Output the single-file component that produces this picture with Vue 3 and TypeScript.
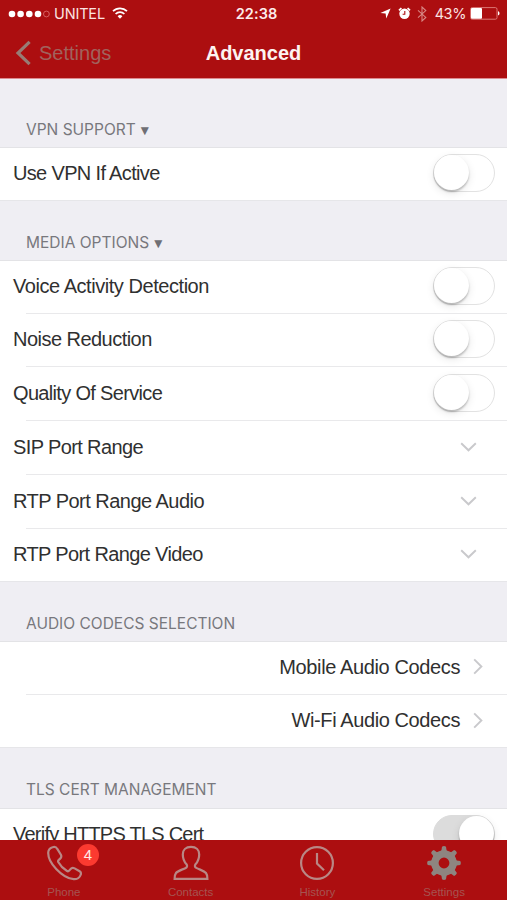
<script setup lang="ts">
interface Row {
  label: string
  kind: 'toggle' | 'expand' | 'link'
  on?: boolean
  spacing: number
}

interface Section {
  title: string
  collapsible: boolean
  height: number
  rows: Row[]
}

const sections: Section[] = [
  {
    title: 'VPN SUPPORT',
    collapsible: true,
    height: 68,
    rows: [{ label: 'Use VPN If Active', kind: 'toggle', spacing: -0.66 }],
  },
  {
    title: 'MEDIA OPTIONS',
    collapsible: true,
    height: 59.5,
    rows: [
      { label: 'Voice Activity Detection', kind: 'toggle', spacing: -0.45 },
      { label: 'Noise Reduction', kind: 'toggle', spacing: -0.53 },
      { label: 'Quality Of Service', kind: 'toggle', spacing: -0.67 },
      { label: 'SIP Port Range', kind: 'expand', spacing: -0.62 },
      { label: 'RTP Port Range Audio', kind: 'expand', spacing: -0.53 },
      { label: 'RTP Port Range Video', kind: 'expand', spacing: -0.63 },
    ],
  },
  {
    title: 'AUDIO CODECS SELECTION',
    collapsible: false,
    height: 58.8,
    rows: [
      { label: 'Mobile Audio Codecs', kind: 'link', spacing: -0.38 },
      { label: 'Wi-Fi Audio Codecs', kind: 'link', spacing: -0.4 },
    ],
  },
  {
    title: 'TLS CERT MANAGEMENT',
    collapsible: false,
    height: 59.5,
    rows: [{ label: 'Verify HTTPS TLS Cert', kind: 'toggle', on: true, spacing: -0.76 }],
  },
]
</script>

<template>
  <div class="screen">
    <header class="top">
      <div class="status">
        <div class="status-side">
          <svg class="signal" width="42" height="10" viewBox="0 0 42 10">
            <circle cx="4" cy="5" r="3.3" />
            <circle cx="12.6" cy="5" r="3.3" />
            <circle cx="21.3" cy="5" r="3.3" />
            <circle cx="30" cy="5" r="3.3" />
            <circle class="empty" cx="38.4" cy="5" r="2.9" />
          </svg>
          <span class="carrier">UNITEL</span>
          <svg class="wifi" width="16" height="12" viewBox="0 0 16 12">
            <path d="M1 4.2a10 10 0 0 1 14 0M3.6 7a6.3 6.3 0 0 1 8.8 0" />
            <path class="solid" d="M8 11.8 5.6 9.2a3.5 3.5 0 0 1 4.8 0z" />
          </svg>
        </div>
        <span class="clock">22:38</span>
        <div class="status-side right">
          <svg class="location" width="11" height="11" viewBox="0 0 11 11">
            <path d="M10.6.4 6.3 10.6 5.6 5.6.4 4.9z" />
          </svg>
          <svg class="alarm" width="13" height="13" viewBox="0 0 13 13">
            <path class="bells" d="M1 3.3 3.4 1M12 3.3 9.6 1" />
            <circle cx="6.5" cy="6.8" r="5.2" />
            <path class="hands" d="M6.8 3.9v3.3H4.6" />
          </svg>
          <svg class="bluetooth" width="10" height="16" viewBox="0 0 10 16">
            <path d="M1 4.3 8.8 11.4 5 15V1l3.8 3.6L1 11.7" />
          </svg>
          <span class="percent">43%</span>
          <svg class="battery" width="30" height="13" viewBox="0 0 30 13">
            <rect class="case" x=".6" y=".6" width="26.4" height="11.6" rx="1.6" />
            <rect class="level" x="1" y="1" width="11" height="10.8" rx="1" />
            <path class="level" d="M28 4.3c2 .6 2 3.6 0 4.2z" />
          </svg>
        </div>
      </div>
      <nav class="nav">
        <div class="back">
          <svg width="17" height="26" viewBox="0 0 17 26"><path d="M14.6 1.8 3 13l11.6 11.2" /></svg>
          <span>Settings</span>
        </div>
        <h1>Advanced</h1>
        <div></div>
      </nav>
    </header>

    <main class="content">
      <section v-for="section in sections" :key="section.title">
        <h2 class="heading" :style="{ height: section.height + 'px' }">
          <span>{{ section.title }}</span>
          <span v-if="section.collapsible" class="caret">▼</span>
        </h2>
        <div class="rows">
          <div v-for="row in section.rows" :key="row.label" class="row" :class="row.kind">
            <span class="label" :style="{ letterSpacing: row.spacing + 'px' }">{{ row.label }}</span>
            <span v-if="row.kind === 'toggle'" class="switch" :class="{ on: row.on }"><i></i></span>
            <svg v-else-if="row.kind === 'expand'" class="chevron" width="17" height="10" viewBox="0 0 17 10">
              <path d="M1.2 1.2 8.5 8.3l7.3-7.1" />
            </svg>
            <svg v-else class="chevron" width="10" height="17" viewBox="0 0 10 17">
              <path d="M1.2 1.4 8.4 8.5l-7.2 7.1" />
            </svg>
          </div>
        </div>
      </section>
    </main>

    <footer class="tabs">
      <div class="tab">
        <svg width="36" height="36" viewBox="0 0 36 36">
          <path d="M6.5 2.2C4 3 2.2 5 2.2 8c0 5 3.300 11 8 16 5 5.300 12 9.900 17.500 10.200 3.300.2 6.300-1.900 7.100-4.700.4-1.400-.1-2.500-1.200-3.200l-5-2.900c-1.500-.8-3-.6-4 .6l-1.400 1.600c-.7.8-1.600.8-2.500.2-3.500-2.100-6.400-5.100-8.300-8.500-.5-.9-.4-1.700.4-2.400l1.400-1.300c1.200-1.100 1.400-2.400.7-3.800L11.300 3.900c-1-1.900-2.800-2.400-4.800-1.700z" />
        </svg>
        <span>Phone</span>
        <b class="badge">4</b>
      </div>
      <div class="tab">
        <svg width="36" height="36" viewBox="0 0 36 36">
          <path d="M18 1.900c-5.200 0-8.200 3-8.200 7.500 0 4.200 1.500 7.400 3.700 9.900 1 1.200.7 2.900-.7 3.600-3.600 1.900-8 2.800-9.800 5.100-1 1.300-1.400 3.200-1.400 5.900h32.800c0-2.700-.4-4.600-1.400-5.900-1.800-2.300-6.200-3.200-9.800-5.100-1.400-.7-1.700-2.400-.7-3.600 2.200-2.500 3.700-5.700 3.700-9.900 0-4.500-3-7.500-8.200-7.500z" />
        </svg>
        <span>Contacts</span>
      </div>
      <div class="tab">
        <svg width="36" height="36" viewBox="0 0 36 36">
          <circle cx="18" cy="18" r="15.9" />
          <path d="M18 8v10.500l7 6.800" />
        </svg>
        <span>History</span>
      </div>
      <div class="tab">
        <svg class="gear" width="36" height="36" viewBox="0 0 36 36">
          <circle cx="18" cy="18" r="9.100" />
          <path v-for="n in 8" :key="n" :transform="`rotate(${n * 45} 18 18)`" d="M13 7.500 15.400 5.400l.6-3.700q2-1.200 4 0l.6 3.700L23 7.500z" />
        </svg>
        <span>Settings</span>
      </div>
    </footer>
  </div>
</template>

<style>
body {
  margin: 0;
  overflow: hidden;
}
</style>

<style scoped>
.screen {
  width: 507px;
  height: 900px;
  display: flex;
  flex-direction: column;
  overflow: hidden;
  background: #efeef3;
  font-family: 'Liberation Sans', Arial, sans-serif;
}

.top {
  flex: none;
  box-sizing: border-box;
  height: 79px;
  background: #ac0e10;
  border-bottom: 1px solid #dc8b90;
  color: #fff;
}

.status {
  height: 27px;
  display: grid;
  grid-template-columns: 1fr auto 1fr;
  align-items: center;
  padding: 0 7px 0 8px;
  font-family: Inter, sans-serif;
}

.status-side {
  display: flex;
  align-items: center;
  color: #fbe3e1;
}

.right {
  justify-content: flex-end;
}

.signal {
  fill: #fff;
}

.signal .empty {
  fill: none;
  stroke: #d9696a;
  stroke-width: 0.9;
}

.carrier {
  margin-left: 4px;
  font-size: 14.5px;
  letter-spacing: -0.15px;
}

.wifi {
  margin-left: 7px;
  margin-bottom: 2px;
  fill: none;
  stroke: #fff;
  stroke-width: 1.7;
}

.wifi .solid {
  fill: #fff;
  stroke: none;
}

.clock {
  padding-left: 5px;
  font-size: 14.5px;
  font-weight: 600;
  letter-spacing: 0.1px;
  color: #fdeceb;
}

.location {
  fill: #fff;
}

.alarm {
  margin-left: 7px;
  fill: #fff;
}

.alarm .bells {
  stroke: #fff;
  stroke-width: 1.7;
}

.alarm .hands {
  fill: none;
  stroke: #ac0e10;
  stroke-width: 1.1;
}

.bluetooth {
  margin-left: 6px;
  fill: none;
  stroke: #d88784;
  stroke-width: 1.1;
}

.percent {
  margin-left: 8px;
  font-size: 14.5px;
  letter-spacing: -0.4px;
}

.battery {
  margin-left: 4px;
}

.battery .case {
  fill: none;
  stroke: #dc7774;
  stroke-width: 1;
}

.battery .level {
  fill: #fff;
}

.nav {
  height: 51px;
  display: grid;
  grid-template-columns: 1fr auto 1fr;
  align-items: center;
  padding: 0 15px;
}

.back {
  display: flex;
  align-items: center;
  gap: 7px;
  color: #a1625d;
  font-size: 20px;
}

.back svg {
  fill: none;
  stroke: #987c75;
  stroke-width: 3.2;
}

.back span {
  padding-top: 1px;
}

h1 {
  margin: 0;
  padding-top: 1px;
  font-size: 20px;
  font-weight: 700;
  color: #fdf3f1;
}

.content {
  flex: 1;
  min-height: 0;
  overflow: hidden;
}

.heading {
  box-sizing: border-box;
  margin: 0;
  padding: 0 26px 7.5px;
  display: flex;
  align-items: flex-end;
  font-family: Inter, sans-serif;
  font-size: 15.5px;
  line-height: 20px;
  font-weight: 400;
  color: #78787d;
}

.caret {
  margin-left: 5px;
  font-family: 'DejaVu Sans', sans-serif;
  font-size: 10.5px;
  color: #6f6f74;
}

.rows {
  background: #fff;
  box-shadow: inset 0 1px #e3e3e6, inset 0 -1px #e6e6e9;
}

.row {
  box-sizing: border-box;
  height: 53.75px;
  display: flex;
  align-items: center;
  justify-content: space-between;
  padding: 0 12px 2px 13px;
  background: linear-gradient(#e9e9eb, #e9e9eb) 26px 100% / 100% 1px no-repeat;
}

.row:first-child {
  height: 53.5px;
}

.row:last-child {
  background: none;
}

.label {
  font-size: 20px;
  line-height: 24px;
  color: #303030;
  white-space: nowrap;
}

.row.expand {
  padding-right: 30px;
}

.row.link {
  justify-content: flex-end;
  gap: 13px;
  padding-right: 24px;
}

.chevron {
  fill: none;
  stroke: #c9c9cc;
  stroke-width: 1.9;
}

.switch {
  box-sizing: border-box;
  width: 62px;
  height: 38px;
  display: flex;
  border: 1.5px solid #e2e2e2;
  border-radius: 19px;
  background: #fff;
}

.switch i {
  width: 35px;
  height: 35px;
  border-radius: 50%;
  background: #fff;
  box-shadow: 0 2px 2px rgba(0, 0, 0, 0.22), 0 3px 9px rgba(0, 0, 0, 0.1);
}

.switch.on {
  justify-content: flex-end;
  background: #dcdcdc;
  border-color: #dcdcdc;
}

.tabs {
  flex: none;
  height: 60px;
  display: grid;
  grid-template-columns: repeat(4, 1fr);
  background: #ac0e10;
}

.tab {
  position: relative;
  display: flex;
  flex-direction: column;
  align-items: center;
  padding: 5px 0 0 1px;
  font-size: 11.5px;
  line-height: 14px;
  color: #a65450;
}

.tab svg {
  fill: none;
  stroke: #b98785;
  stroke-width: 2.2;
}

.tab span {
  margin-top: 4px;
}

.tab .gear {
  stroke: none;
  fill: #8e8580;
}

.tab .gear circle {
  fill: none;
  stroke: #8e8580;
  stroke-width: 7.4;
}

.badge {
  position: absolute;
  left: 77px;
  top: 4px;
  width: 22px;
  height: 22px;
  border-radius: 50%;
  background: #fc3a30;
  color: #ffe9e6;
  font-size: 15px;
  font-weight: 400;
  line-height: 22px;
  text-align: center;
}
</style>
